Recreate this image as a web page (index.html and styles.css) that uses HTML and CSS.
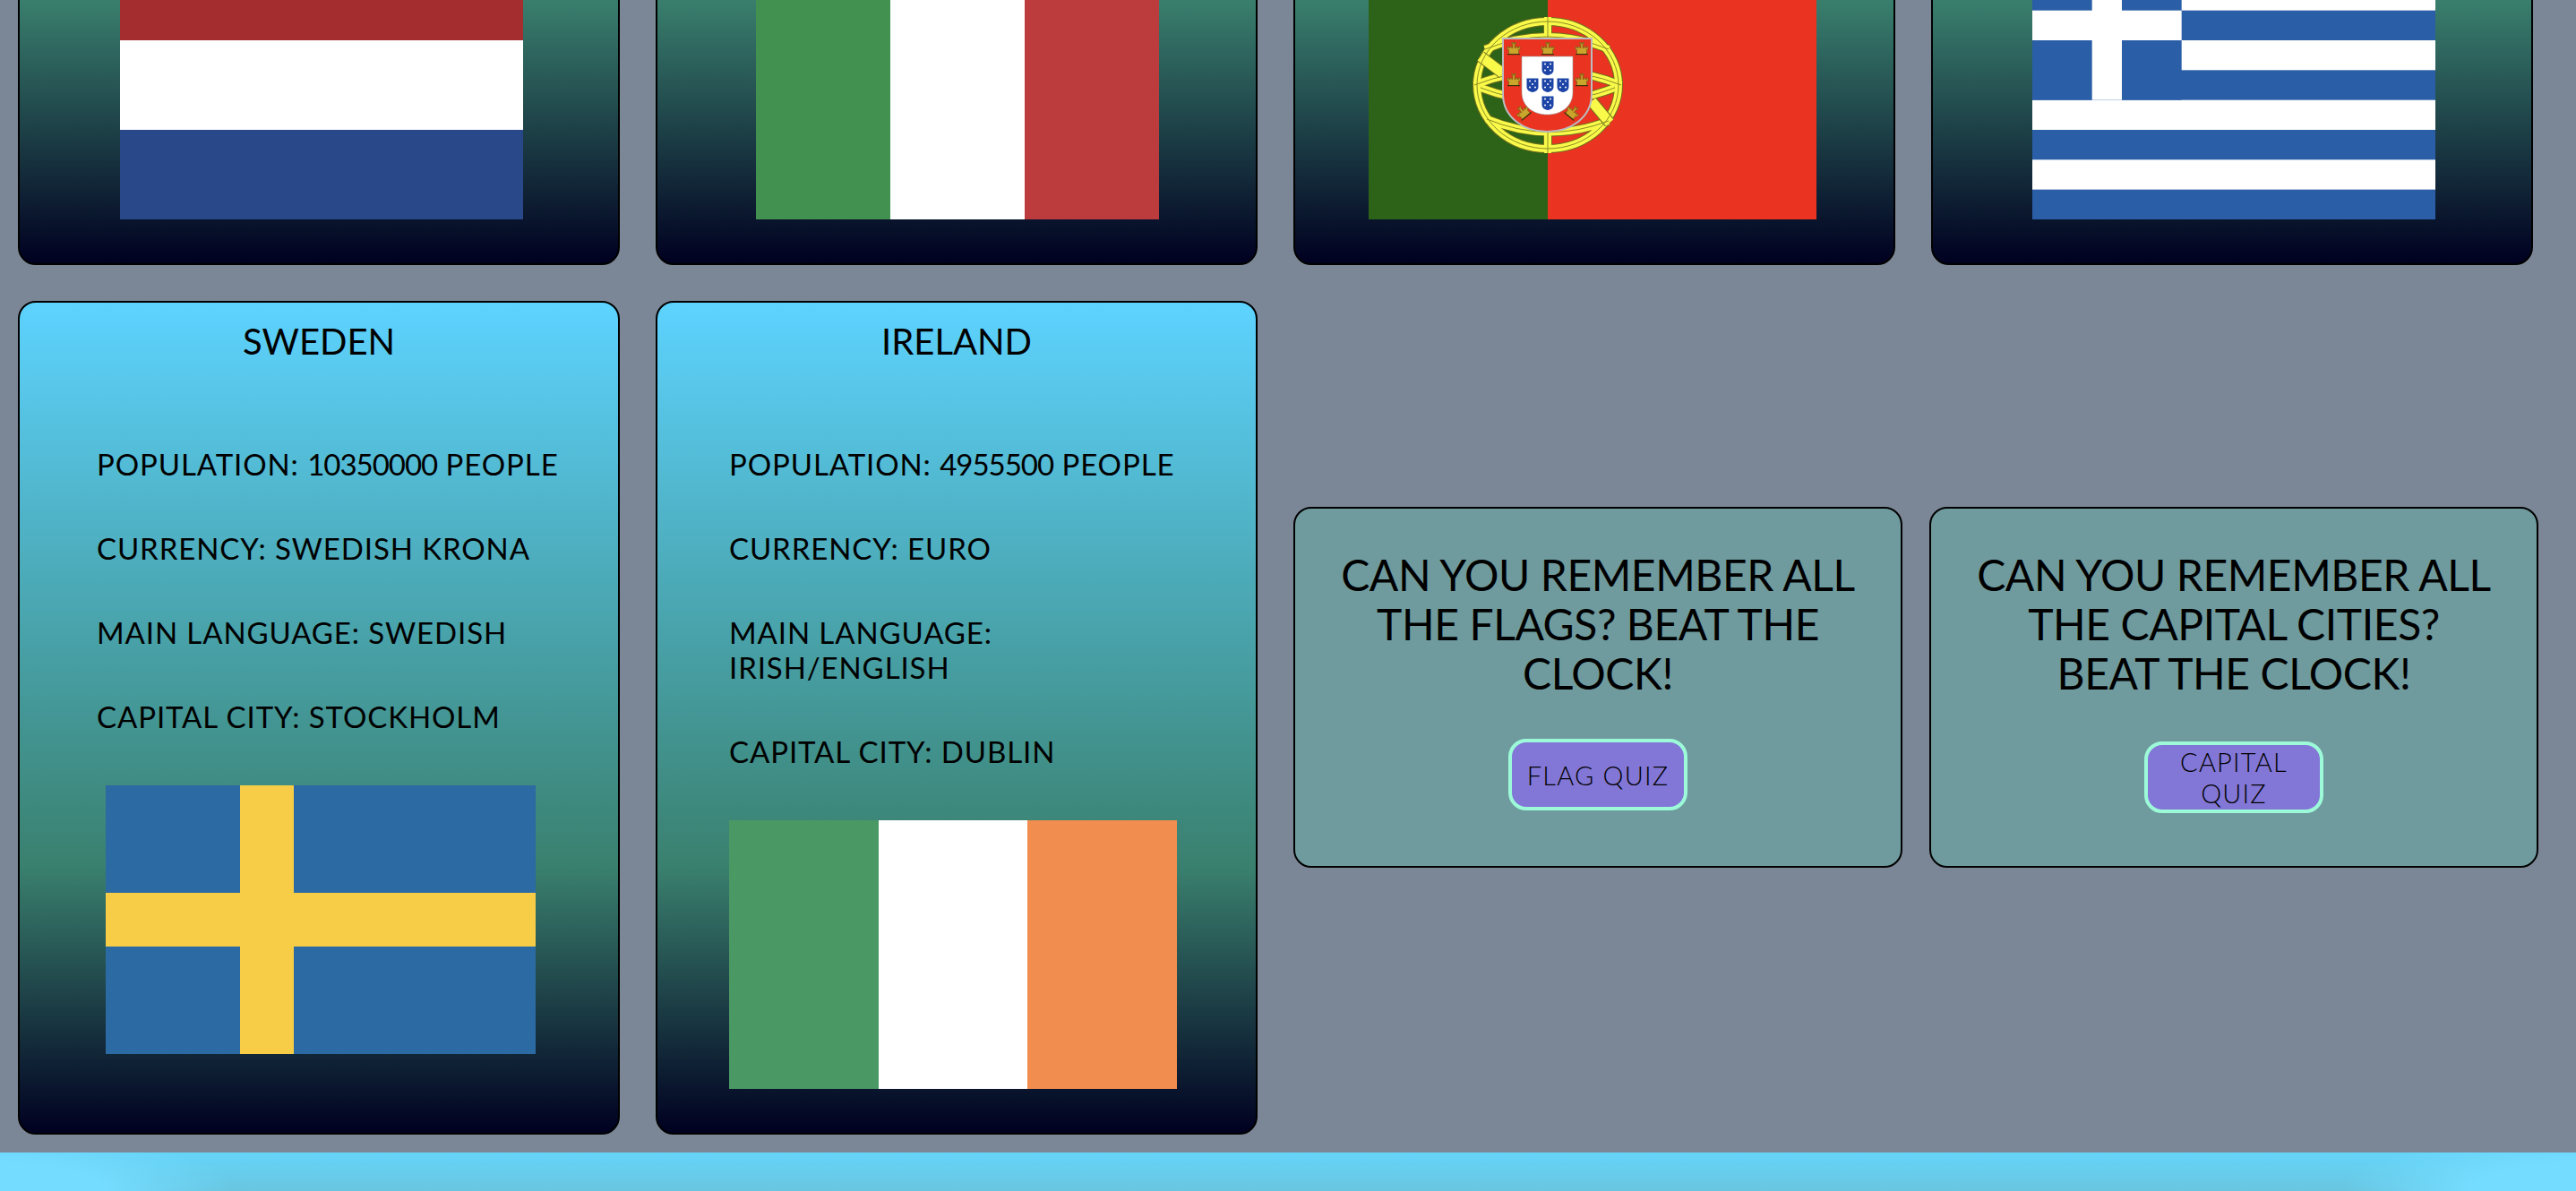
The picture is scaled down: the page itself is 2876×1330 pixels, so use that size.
FILE: index.html
```html
<!DOCTYPE html>
<html lang="en">
<head>
<meta charset="utf-8">
<title>Countries of Europe</title>
<link rel="stylesheet" href="styles.css">
</head>
<body>
<main class="board">
  <article class="country country-top">
    <svg class="flag flag-nl" viewBox="0 0 450 300"><rect width="450" height="100" fill="#a32d2f"/><rect y="100" width="450" height="100" fill="#fff"/><rect y="200" width="450" height="100" fill="#284889"/></svg>
  </article>
  <article class="country country-top">
    <svg class="flag flag-it" viewBox="0 0 450 300"><rect width="150" height="300" fill="#429150"/><rect x="150" width="150" height="300" fill="#fff"/><rect x="300" width="150" height="300" fill="#bc3c3e"/></svg>
  </article>
  <article class="country country-top">
    <svg class="flag flag-pt" viewBox="0 0 500 300">
      <defs>
        <g id="castle"><path d="M-5.500 6.500V1.500H-7V-2H-5.500V-.5H-4V-2H-2.300V-.5H-1.200V-5H-2.300V-6.500H-1V-5.500H-.4V-6.500H.4V-5.500H1V-6.500H2.300V-5H1.200V-.5H2.300V-2H4V-.5H5.500V-2H7V1.500H5.500V6.500Z" fill="#c9a52c" stroke="#6b5a14" stroke-width=".6"/><rect x="-7" y="6" width="14" height="1.200" fill="#3b3208"/></g>
        <g id="quina"><path d="M-6.500 -7.500H6.500V2C6.500 5.500 3.500 7.500 0 8C-3.500 7.500 -6.500 5.500 -6.500 2Z" fill="#1c44a6"/><g fill="#fff"><circle cx="-3" cy="-4.500" r="1"/><circle cx="3" cy="-4.500" r="1"/><circle cx="0" cy="-1" r="1"/><circle cx="-3" cy="2.500" r="1"/><circle cx="3" cy="2.500" r="1"/></g></g>
        <g id="sphere">
          <ellipse cx="200" cy="150" rx="79" ry="71"/>
          <path d="M130 110Q200 82 268 110"/>
          <path d="M118 150Q200 118 282 150"/>
          <path d="M125 153Q200 182 275 153"/>
          <path d="M132 188Q200 216 268 190"/>
          <path d="M200 74V226"/>
        </g>
        <g id="sash">
          <path d="M125 118L150 137"/>
          <path d="M249 168L269 192"/>
        </g>
      </defs>
      <rect width="200" height="300" fill="#2d6318"/>
      <rect x="200" width="300" height="300" fill="#ea3421"/>
      <use href="#sphere" class="sphere-edge"/>
      <use href="#sphere" class="sphere-fill"/>
      <use href="#sash" class="sash-edge"/>
      <use href="#sash" class="sash-fill"/>
      <use href="#sphere" class="sphere-line"/>
      <path d="M150 98H249V160C249 186 226 202 199.500 202C173 202 150 186 150 160Z" fill="#ea3421" stroke="#b9bcc0" stroke-width="2"/>
      <path d="M171 118H228V158C228 173 216 183 199.500 183C183 183 171 173 171 158Z" fill="#fff" stroke="#999" stroke-width=".6"/>
      <use href="#castle" x="162" y="109"/><use href="#castle" x="200" y="109"/><use href="#castle" x="238" y="109"/>
      <use href="#castle" x="162" y="144"/><use href="#castle" x="238" y="144"/>
      <use href="#castle" transform="translate(172 180) rotate(-40)"/><use href="#castle" transform="translate(228 180) rotate(40)"/>
      <use href="#quina" x="200" y="131"/><use href="#quina" x="183" y="150"/><use href="#quina" x="200" y="150"/><use href="#quina" x="217" y="150"/><use href="#quina" x="200" y="170"/>
    </svg>
  </article>
  <article class="country country-top">
    <svg class="flag flag-gr" viewBox="0 0 450 300">
      <rect width="450" height="300" fill="#2a5ea7"/>
      <g fill="#fff">
        <rect y="33.330" width="450" height="33.330"/><rect y="100" width="450" height="33.330"/><rect y="166.670" width="450" height="33.330"/><rect y="233.330" width="450" height="33.330"/>
      </g>
      <rect width="166.670" height="166.670" fill="#2a5ea7"/>
      <rect x="66.670" width="33.330" height="166.670" fill="#fff"/>
      <rect y="66.670" width="166.670" height="33.330" fill="#fff"/>
    </svg>
  </article>

  <article class="country">
    <h2 class="country-name">SWEDEN</h2>
    <div class="facts facts-se">
      <p class="fact">POPULATION: <span class="digits">10350000</span> PEOPLE</p>
      <p class="fact">CURRENCY: SWEDISH KRONA</p>
      <p class="fact">MAIN LANGUAGE: SWEDISH</p>
      <p class="fact">CAPITAL CITY: STOCKHOLM</p>
    </div>
    <svg class="flag flag-se" viewBox="0 0 480 300"><rect width="480" height="300" fill="#2b6aa3"/><rect x="150" width="60" height="300" fill="#f7cd47"/><rect y="120" width="480" height="60" fill="#f7cd47"/></svg>
  </article>
  <article class="country">
    <h2 class="country-name">IRELAND</h2>
    <div class="facts facts-ie">
      <p class="fact">POPULATION: <span class="digits">4955500</span> PEOPLE</p>
      <p class="fact">CURRENCY: EURO</p>
      <p class="fact">MAIN LANGUAGE:<br>IRISH/ENGLISH</p>
      <p class="fact">CAPITAL CITY: DUBLIN</p>
    </div>
    <svg class="flag flag-ie" viewBox="0 0 500 300"><rect width="167" height="300" fill="#4a9863"/><rect x="167" width="166" height="300" fill="#fff"/><rect x="333" width="167" height="300" fill="#f08d4f"/></svg>
  </article>

  <section class="quizzes">
    <div class="quiz">
      <h2 class="quiz-title">CAN YOU REMEMBER ALL<br>THE FLAGS? BEAT THE<br>CLOCK!</h2>
      <button class="quiz-button" type="button">FLAG QUIZ</button>
    </div>
    <div class="quiz">
      <h2 class="quiz-title">CAN YOU REMEMBER ALL<br>THE CAPITAL CITIES?<br>BEAT THE CLOCK!</h2>
      <button class="quiz-button quiz-button-low" type="button">CAPITAL<br>QUIZ</button>
    </div>
  </section>
</main>
<footer class="footer"></footer>
</body>
</html>
```
FILE: styles.css
```css
html, body {
  margin: 0;
  height: 1330px;
  overflow: hidden;
}

body {
  background: #7b8796;
  font-family: "Lato", "Noto Sans", sans-serif;
  font-weight: 300;
  color: #000;
}

.board {
  display: grid;
  grid-template-columns: repeat(4, 672px);
  grid-auto-rows: 931px;
  column-gap: 40px;
  row-gap: 40px;
  margin-top: -635px;
  padding: 0 0 20px 20px;
}

.country {
  box-sizing: border-box;
  border: 2px solid #000;
  border-radius: 20px;
  background: linear-gradient(#5dd3ff 0%, #3a806e 68%, #000020 100%);
  display: flex;
  flex-direction: column;
  align-items: flex-start;
}

.country-top {
  justify-content: flex-end;
  padding-bottom: 49px;
}

.country-name {
  align-self: stretch;
  margin: 19px 0 0;
  font-size: 40px;
  font-weight: 400;
  line-height: 48px;
  text-align: center;
}

.facts {
  margin-top: 94px;
  margin-bottom: 2px;
  white-space: nowrap;
}

.facts-se { margin-left: 86px; }
.facts-ie { margin-left: 80px; }

.fact {
  margin: 0 0 55px;
  font-size: 33px;
  font-weight: 400;
  line-height: 39px;
  letter-spacing: .9px;
}

.digits {
  letter-spacing: -1px;
}

.flag {
  display: block;
  flex: none;
  height: 300px;
}

.flag-nl { width: 450px; margin-left: 112px; }
.flag-it { width: 450px; margin-left: 110px; }
.flag-pt { width: 500px; margin-left: 82px; }
.flag-gr { width: 450px; margin-left: 111px; }
.flag-se { width: 480px; margin-left: 96px; }
.flag-ie { width: 500px; margin-left: 80px; }

.sphere-edge,
.sphere-fill,
.sphere-line,
.sash-edge,
.sash-fill {
  fill: none;
}
.sphere-edge { stroke: #6f6f1c; stroke-width: 10; }
.sphere-fill { stroke: #f9f94a; stroke-width: 8; }
.sphere-line { stroke: #8c8c22; stroke-width: 1; }
.sash-edge { stroke: #6f6f1c; stroke-width: 13; }
.sash-fill { stroke: #f9f94a; stroke-width: 11; }

.quizzes {
  grid-column: 3 / 5;
  display: flex;
  justify-content: space-between;
  align-items: flex-start;
  width: 1390px;
  padding-top: 230px;
}

.quiz {
  box-sizing: border-box;
  width: 680px;
  height: 403px;
  padding: 46px 0 0;
  border: 2px solid #000;
  border-radius: 20px;
  background: #6f9b9e;
  display: flex;
  flex-direction: column;
  align-items: center;
}

.quiz-title {
  margin: 0;
  font-size: 48px;
  font-weight: 400;
  line-height: 55px;
  text-align: center;
  letter-spacing: -.4px;
}

.quiz-button {
  box-sizing: border-box;
  width: 200px;
  height: 80px;
  margin-top: 46px;
  padding: 0;
  border: 4px solid #9cfad9;
  border-radius: 20px;
  background: #8277d6;
  color: #000;
  font-family: inherit;
  font-size: 29px;
  font-weight: 300;
  line-height: 35px;
  letter-spacing: 1.2px;
}

.quiz-button-low { margin-top: 49px; }

.footer {
  height: 43px;
  background:
    radial-gradient(ellipse 260px 70px at 0 100%, #74dcff 45%, rgba(116, 220, 255, 0) 100%),
    radial-gradient(ellipse 260px 70px at 100% 100%, #74dcff 45%, rgba(116, 220, 255, 0) 100%),
    linear-gradient(#65d4f9, #69c6e0);
}
```
